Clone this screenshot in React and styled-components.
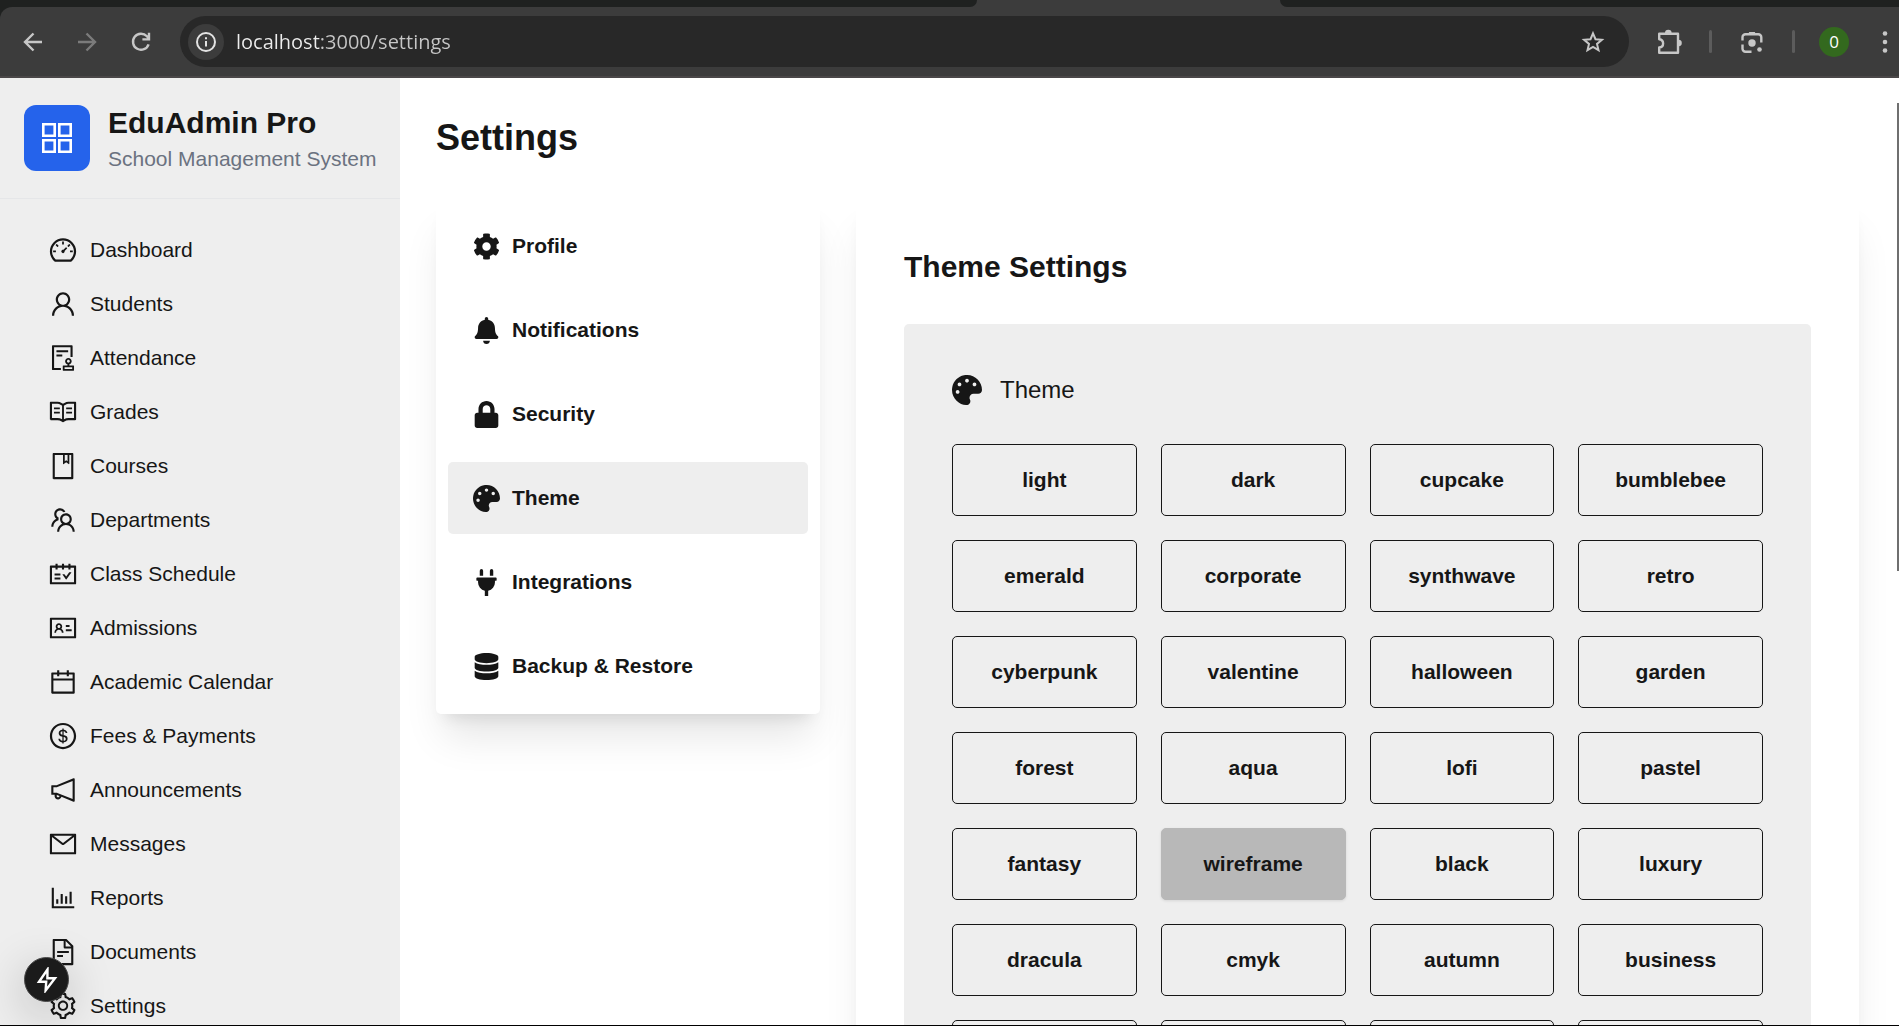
import React, { useState } from "react";
import styled, { createGlobalStyle } from "styled-components";
import {
  AiOutlineDashboard, AiOutlineUser, AiOutlineAudit, AiOutlineRead, AiOutlineBook,
  AiOutlineTeam, AiOutlineSchedule, AiOutlineIdcard, AiOutlineCalendar, AiOutlineDollar,
  AiOutlineNotification, AiOutlineMail, AiOutlineBarChart, AiOutlineFileText, AiOutlineSetting,
} from "react-icons/ai";
import { FaCog, FaBell, FaLock, FaPalette, FaPlug, FaDatabase } from "react-icons/fa";

const ink = "#161616";
const surface = "#eeeeee";

const GlobalStyle = createGlobalStyle`
  *, *::before, *::after { box-sizing: border-box; }
  body {
    margin: 0;
    background: #fff;
    color: ${ink};
    font-family: "Liberation Sans", Arial, sans-serif;
  }
  button, input { font: inherit; color: inherit; }
`;

const Screen = styled.div`
  height: 100vh;
  display: flex;
  flex-direction: column;
  overflow: hidden;
  border-bottom: 1px solid #000;
`;

/* Browser frame */
const Chrome = styled.header`
  flex: none;
  background: #1f2120;
`;
const TabStrip = styled.div`
  display: flex;
  height: 7px;
  background: #3c3c3c;
`;
const TabGap = styled.div`
  flex: ${(p) => p.$grow};
  background: #1f2120;
  border-radius: ${(p) => (p.$side === "left" ? "0 0 10px 0" : "0 0 0 10px")};
`;
const ActiveTab = styled.div`
  width: 303px;
`;
const Toolbar = styled.div`
  height: 71px;
  display: flex;
  align-items: center;
  padding: 0 2px 0 17px;
  background: #3c3c3c;
  border-bottom: 2px solid #4a4748;
  border-radius: 12px 0 0 0;
  color: #c7c7c7;
`;
const ToolButton = styled.button`
  flex: none;
  width: ${(p) => p.$width || 32}px;
  height: 32px;
  padding: 0;
  border: 0;
  background: none;
  display: grid;
  place-items: center;
  color: ${(p) => (p.$dim ? "#7b7b7b" : "#c7c7c7")};
`;
const NavButtons = styled.div`
  display: flex;
  gap: 22px;
  margin-right: 23px;
`;
const AddressBar = styled.div`
  flex: 1;
  height: 51px;
  display: flex;
  align-items: center;
  gap: 12px;
  padding: 0 20px 0 8px;
  border-radius: 26px;
  background: #282828;
`;
const SiteInfo = styled.button`
  flex: none;
  width: 36px;
  height: 36px;
  padding: 0;
  border: 0;
  border-radius: 50%;
  background: #3c3c3c;
  color: #e3e3e3;
  display: grid;
  place-items: center;
`;
const Url = styled.input`
  flex: 1;
  min-width: 0;
  height: 32px;
  padding: 0;
  border: 0;
  outline: 0;
  color: #c7c7c7;
  font: 20px/32px "Open Sans", "Noto Sans", sans-serif;
  background: linear-gradient(to right, #ededed 84px, #c7c7c7 84px);
  background-clip: text;
  -webkit-text-fill-color: transparent;
`;
const Extensions = styled.div`
  display: flex;
  align-items: center;
  gap: 24px;
  margin-left: 24px;
`;
const Divider = styled.span`
  width: 3px;
  height: 23px;
  border-radius: 2px;
  background: #5c5c5c;
`;
const Avatar = styled.button`
  width: 30px;
  height: 30px;
  padding: 0;
  border: 0;
  border-radius: 50%;
  background: #33691e;
  color: #fff;
  font: 17px/30px "Open Sans", "Noto Sans", sans-serif;
`;

/* Application */
const Page = styled.div`
  flex: 1;
  min-height: 0;
  display: flex;
  overflow: hidden;
`;
const Sidebar = styled.aside`
  flex: none;
  width: 400px;
  background: ${surface};
`;
const Brand = styled.div`
  display: flex;
  align-items: center;
  gap: 18px;
  padding: 24px;
  border-bottom: 1px solid #e5e6e8;
`;
const Logo = styled.div`
  flex: none;
  width: 66px;
  height: 66px;
  border-radius: 12px;
  background: #2563eb;
  display: grid;
  place-items: center;
`;
const BrandName = styled.div`
  font-size: 30px;
  line-height: 42px;
  font-weight: 700;
  white-space: nowrap;
`;
const BrandNote = styled.div`
  font-size: 21px;
  line-height: 30px;
  color: #6b7280;
  white-space: nowrap;
`;
const NavList = styled.ul`
  list-style: none;
  margin: 0;
  padding: 24px;
`;
const NavLink = styled.a`
  display: flex;
  align-items: center;
  gap: 12px;
  height: 54px;
  padding: 0 24px;
  font-size: 21px;
  line-height: 30px;
  color: ${ink};
  text-decoration: none;
  svg { width: 30px; height: 30px; }
`;
const Main = styled.main`
  flex: 1;
  min-width: 0;
  padding: 36px;
`;
const PageTitle = styled.h1`
  margin: 0 0 36px;
  font-size: 36px;
  line-height: 48px;
`;
const Columns = styled.div`
  display: flex;
  align-items: flex-start;
  gap: 36px;
`;
const Card = styled.section`
  background: #fff;
  border-radius: 5px;
  box-shadow: 0 30px 38px -8px rgba(0, 0, 0, 0.1), 0 12px 15px -9px rgba(0, 0, 0, 0.1);
`;
const TabMenu = styled(Card).attrs({ as: "nav" })`
  flex: none;
  width: 384px;
  display: flex;
  flex-direction: column;
  gap: 12px;
  padding: 12px;
`;
const TabButton = styled.button`
  height: 72px;
  display: flex;
  align-items: center;
  gap: 12px;
  padding: 0 24px;
  border: 1px solid transparent;
  border-radius: 5px;
  background: ${(p) => (p.$active ? surface : "transparent")};
  font-size: 21px;
  font-weight: 700;
  svg { width: 27px; height: 27px; }
`;
const Content = styled(Card)`
  flex: 1;
  min-width: 0;
  padding: 48px;
`;
const SectionTitle = styled.h2`
  margin: 0 0 36px;
  font-size: 30px;
  line-height: 42px;
`;
const Panel = styled.div`
  padding: 48px;
  border-radius: 5px;
  background: ${surface};
`;
const PanelTitle = styled.div`
  display: flex;
  align-items: center;
  gap: 18px;
  margin-bottom: 36px;
  font-size: 24px;
  line-height: 36px;
  svg { width: 30px; height: 30px; }
`;
const ThemeGrid = styled.div`
  display: grid;
  grid-template-columns: repeat(4, 1fr);
  gap: 24px;
`;
const ThemeButton = styled.button`
  height: 72px;
  padding: 0 24px;
  border: 1px solid ${(p) => (p.$active ? "#b8b8b8" : ink)};
  border-radius: 5px;
  background: ${(p) => (p.$active ? "#b8b8b8" : "transparent")};
  box-shadow: ${(p) => (p.$active ? "0 1px 3px rgba(0, 0, 0, 0.1)" : "none")};
  font-size: 21px;
  font-weight: 700;
`;
const ScrollTrack = styled.div`
  flex: none;
  width: 4px;
  padding: 25px 0 0 2px;
`;
const ScrollThumb = styled.div`
  height: 468px;
  background: #6f6f6f;
`;
const DevButton = styled.button`
  position: fixed;
  left: 24px;
  bottom: 24px;
  width: 45px;
  height: 45px;
  padding: 0;
  border: 1px solid #4a4a4a;
  border-radius: 50%;
  background: #1b1b1b;
  color: #fff;
  display: grid;
  place-items: center;
  box-shadow: 0 12px 48px rgba(0, 0, 0, 0.24);
`;

const navItems = [
  ["Dashboard", AiOutlineDashboard],
  ["Students", AiOutlineUser],
  ["Attendance", AiOutlineAudit],
  ["Grades", AiOutlineRead],
  ["Courses", AiOutlineBook],
  ["Departments", AiOutlineTeam],
  ["Class Schedule", AiOutlineSchedule],
  ["Admissions", AiOutlineIdcard],
  ["Academic Calendar", AiOutlineCalendar],
  ["Fees & Payments", AiOutlineDollar],
  ["Announcements", AiOutlineNotification],
  ["Messages", AiOutlineMail],
  ["Reports", AiOutlineBarChart],
  ["Documents", AiOutlineFileText],
  ["Settings", AiOutlineSetting],
];

const tabs = [
  ["Profile", FaCog],
  ["Notifications", FaBell],
  ["Security", FaLock],
  ["Theme", FaPalette],
  ["Integrations", FaPlug],
  ["Backup & Restore", FaDatabase],
];

const themes = [
  "light", "dark", "cupcake", "bumblebee", "emerald", "corporate", "synthwave", "retro",
  "cyberpunk", "valentine", "halloween", "garden", "forest", "aqua", "lofi", "pastel",
  "fantasy", "wireframe", "black", "luxury", "dracula", "cmyk", "autumn", "business",
];

/* Empty slots that close the grid below the named themes */
const spareSlots = [1, 2, 3, 4];

const stroke = { fill: "none", stroke: "currentColor", strokeWidth: 2.4 };

function BrowserFrame() {
  return (
    <Chrome>
      <TabStrip>
        <TabGap $grow={977} $side="left" />
        <ActiveTab />
        <TabGap $grow={619} $side="right" />
      </TabStrip>
      <Toolbar>
        <NavButtons>
          <ToolButton aria-label="Back">
            <svg width="20" height="20" viewBox="0 0 20 20" {...stroke}><path d="M19 10H2.5M10.5 1.5 2 10l8.500 8.500" /></svg>
          </ToolButton>
          <ToolButton aria-label="Forward" $dim>
            <svg width="20" height="20" viewBox="0 0 20 20" {...stroke}><path d="M1 10h16.500M9.500 1.500 18 10l-8.500 8.500" /></svg>
          </ToolButton>
          <ToolButton aria-label="Reload">
            <svg width="20" height="20" viewBox="0 0 20 20" {...stroke}><path d="M17.600 12.300a8 8 0 1 1-1.700-8L18 6.700M18 .8v6.600h-6.600" /></svg>
          </ToolButton>
        </NavButtons>
        <AddressBar>
          <SiteInfo aria-label="Site information">
            <svg width="20" height="20" viewBox="0 0 20 20" fill="none" stroke="currentColor" strokeWidth="2"><circle cx="10" cy="10" r="9" /><path d="M10 9v5.500M10 5.300v2" /></svg>
          </SiteInfo>
          <Url aria-label="Address" defaultValue="localhost:3000/settings" />
          <ToolButton aria-label="Bookmark">
            <svg width="24" height="24" viewBox="0 0 24 24" {...stroke} strokeWidth="2"><path d="m12 3.300 2.500 5.900 6.400.5-4.900 4.200 1.500 6.200-5.500-3.300-5.500 3.300L8 13.900 3.100 9.700l6.400-.5z" /></svg>
          </ToolButton>
        </AddressBar>
        <Extensions>
          <ToolButton aria-label="Extensions">
            <svg width="26" height="26" viewBox="0 0 26 26" {...stroke}>
              <path d="M3.200 4.700H22v19H3.200v-5.200c5.200-.6 5.200-7.600 0-8.300z" strokeLinejoin="round" />
              <path d="M9 4a3.300 3.300 0 0 1 6.600 0zM22.500 10.800a3.300 3.300 0 0 1 0 6.600z" fill="currentColor" stroke="none" />
            </svg>
          </ToolButton>
          <Divider />
          <ToolButton aria-label="Search with Lens">
            <svg width="24" height="24" viewBox="0 0 24 24" {...stroke}>
              <path d="M2.500 10.500V7.300a3 3 0 0 1 3-3h12.800a3 3 0 0 1 3 3v5.200M2.500 14.500v4.200a3 3 0 0 0 3 3h6" />
              <path d="M8 4.300 9.200 2h5.600L16 4.300z" fill="currentColor" stroke="none" />
              <circle cx="12" cy="13" r="3.700" fill="currentColor" stroke="none" />
              <circle cx="19.500" cy="19.500" r="2.300" fill="currentColor" stroke="none" />
            </svg>
          </ToolButton>
          <Divider />
          <Avatar aria-label="Profile">0</Avatar>
          <ToolButton aria-label="Browser menu" $width={24}>
            <svg width="6" height="24" viewBox="0 0 6 24" fill="currentColor"><circle cx="3" cy="3.500" r="2.300" /><circle cx="3" cy="12" r="2.300" /><circle cx="3" cy="20.500" r="2.300" /></svg>
          </ToolButton>
        </Extensions>
      </Toolbar>
    </Chrome>
  );
}

export default function App() {
  const [tab, setTab] = useState("Theme");
  const [theme, setTheme] = useState("wireframe");
  return (
    <Screen>
      <GlobalStyle />
      <BrowserFrame />
      <Page>
        <Sidebar>
          <Brand>
            <Logo>
              <svg width="30" height="30" viewBox="0 0 30 30" fill="none" stroke="#fff" strokeWidth="2.600">
                <path d="M1.300 1.300h11.400v11.400h-11.400zM17.300 1.300h11.400v11.400h-11.400zM1.300 17.300h11.400v11.400h-11.400zM17.300 17.300h11.400v11.400h-11.400z" />
              </svg>
            </Logo>
            <div>
              <BrandName>EduAdmin Pro</BrandName>
              <BrandNote>School Management System</BrandNote>
            </div>
          </Brand>
          <nav>
            <NavList>
              {navItems.map(([label, Icon]) => (
                <li key={label}><NavLink href="#"><Icon />{label}</NavLink></li>
              ))}
            </NavList>
          </nav>
        </Sidebar>
        <Main>
          <PageTitle>Settings</PageTitle>
          <Columns>
            <TabMenu>
              {tabs.map(([label, Icon]) => (
                <TabButton key={label} $active={label === tab} onClick={() => setTab(label)}><Icon />{label}</TabButton>
              ))}
            </TabMenu>
            <Content>
              <SectionTitle>Theme Settings</SectionTitle>
              <Panel>
                <PanelTitle><FaPalette />Theme</PanelTitle>
                <ThemeGrid>
                  {themes.map((name) => (
                    <ThemeButton key={name} $active={name === theme} onClick={() => setTheme(name)}>{name}</ThemeButton>
                  ))}
                  {spareSlots.map((slot) => <ThemeButton key={slot} aria-label="Empty theme slot" />)}
                </ThemeGrid>
              </Panel>
            </Content>
          </Columns>
        </Main>
        <ScrollTrack><ScrollThumb /></ScrollTrack>
      </Page>
      <DevButton aria-label="Developer tools">
        <svg width="24" height="26" viewBox="0 0 24 26" fill="none" stroke="currentColor" strokeWidth="2.400"><path d="M12.500 2.500 4 14.800h7.200l-.6 8.700L20 11.200h-7.600z" /></svg>
      </DevButton>
    </Screen>
  );
}
